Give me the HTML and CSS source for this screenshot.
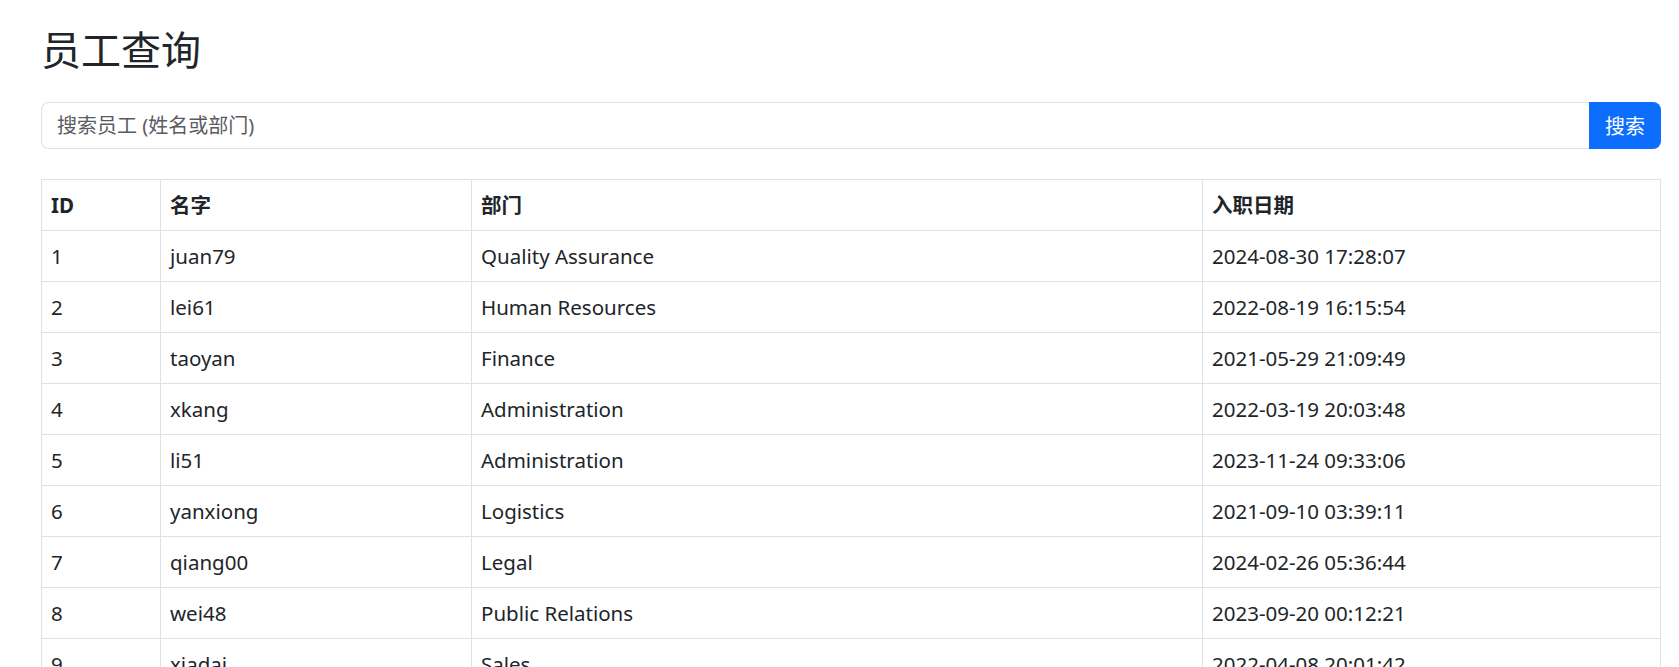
FILE: index.html
```html
<!DOCTYPE html>
<html lang="zh-CN">
<head>
<meta charset="utf-8">
<title>员工查询</title>
<link rel="stylesheet" href="styles.css">
</head>
<body>
<div class="page">
  <h1 class="title">员工查询</h1>
  <form class="search">
    <input class="search-input" type="text" placeholder="搜索员工 (姓名或部门)">
    <button class="search-btn" type="button">搜索</button>
  </form>
  <table class="grid">
    <colgroup>
      <col class="c-id"><col class="c-name"><col class="c-dept"><col class="c-date">
    </colgroup>
    <thead>
      <tr><th>ID</th><th>名字</th><th>部门</th><th>入职日期</th></tr>
    </thead>
    <tbody>
      <tr><td>1</td><td>juan79</td><td>Quality Assurance</td><td>2024-08-30 17:28:07</td></tr>
      <tr><td>2</td><td>lei61</td><td>Human Resources</td><td>2022-08-19 16:15:54</td></tr>
      <tr><td>3</td><td>taoyan</td><td>Finance</td><td>2021-05-29 21:09:49</td></tr>
      <tr><td>4</td><td>xkang</td><td>Administration</td><td>2022-03-19 20:03:48</td></tr>
      <tr><td>5</td><td>li51</td><td>Administration</td><td>2023-11-24 09:33:06</td></tr>
      <tr><td>6</td><td>yanxiong</td><td>Logistics</td><td>2021-09-10 03:39:11</td></tr>
      <tr><td>7</td><td>qiang00</td><td>Legal</td><td>2024-02-26 05:36:44</td></tr>
      <tr><td>8</td><td>wei48</td><td>Public Relations</td><td>2023-09-20 00:12:21</td></tr>
      <tr><td>9</td><td>xiadai</td><td>Sales</td><td>2022-04-08 20:01:42</td></tr>
    </tbody>
  </table>
</div>
</body>
</html>
```
FILE: styles.css
```css
* { box-sizing: border-box; }
html, body { margin: 0; padding: 0; background: #fff; }
body {
  font-family: "Noto Sans", "Noto Sans CJK SC", sans-serif;
  font-size: 20px;
  line-height: 1.5;
  color: #212529;
}
.page {
  padding: 24px 18px 0 41px;
}
.title {
  margin: 0 0 30px 0;
  font-size: 40px;
  line-height: 1.2;
  font-weight: 400;
  font-family: "Noto Sans CJK SC", sans-serif;
  color: #212529;
}
.search {
  display: flex;
  height: 47px;
  margin: 0 0 30px 0;
}
.search-input {
  flex: 1;
  min-width: 0;
  height: 47px;
  padding: 7px 15px;
  border: 1px solid #dee2e6;
  border-right: 0;
  border-radius: 8px 0 0 8px;
  font-family: "Noto Sans", "Noto Sans CJK SC", sans-serif;
  font-size: 20px;
  color: #212529;
  outline: none;
}
.search-input::placeholder { color: #595c5f; opacity: 1; }
.search-btn {
  width: 72px;
  height: 47px;
  border: 0;
  border-radius: 0 8px 8px 0;
  background: #0d6efd;
  color: #fff;
  font-family: "Noto Sans CJK SC", sans-serif;
  font-size: 20px;
  padding: 0;
}
.grid {
  width: 100%;
  border-collapse: collapse;
  table-layout: fixed;
  border: 1px solid #dee2e6;
}
.c-id { width: 119px; }
.c-name { width: 311px; }
.c-dept { width: 731px; }
.c-date { width: auto; }
.grid th, .grid td {
  border: 1px solid #dee2e6;
  padding: 10px 9px;
  text-align: left;
  vertical-align: top;
  line-height: 30px;
  font-size: 20.5px;
  white-space: nowrap;
}
.grid th {
  font-weight: 700;
  font-family: "Noto Sans", "Noto Sans CJK SC", sans-serif;
}
```
